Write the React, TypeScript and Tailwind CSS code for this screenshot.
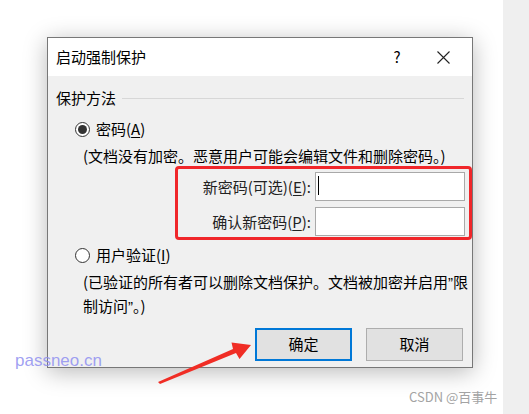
import React from "react";

const cjk = { fontFamily: '"Microsoft YaHei", "Noto Sans CJK SC", "Noto Sans", sans-serif' };
const latin = { fontFamily: '"Liberation Sans", Arial, sans-serif' };

function Radio({ checked }: { checked?: boolean }) {
  return (
    <span className="flex h-[15px] w-[15px] shrink-0 items-center justify-center rounded-full border border-[#333] bg-white">
      {checked && <span className="h-[9px] w-[9px] rounded-full bg-[#333]" />}
    </span>
  );
}

function Field({ label, hot, cursor }: { label: string; hot: string; cursor?: boolean }) {
  return (
    <div className="flex items-center">
      <div className="w-[137px] pr-[4px] text-right leading-5">
        {label}(<span className="underline underline-offset-2">{hot}</span>):
      </div>
      <div className="relative h-[29px] w-[150px] border border-[#a9a9a9] bg-white">
        {cursor && <span className="absolute left-[2px] top-[3px] h-[19px] w-px bg-black" />}
      </div>
    </div>
  );
}

export default function App() {
  return (
    <div className="relative flex h-[414px] w-[529px] overflow-hidden whitespace-nowrap bg-white text-[15px] text-black" style={cjk}>
      <div className="w-[503px] shrink-0 pl-[47px] pt-[37px]">
        <div className="flex h-[331px] w-[426px] flex-col border border-[#777] bg-[#f0f0f0] shadow-[0_4px_22px_rgba(0,0,0,0.28)]">
          <div className="flex h-[38px] shrink-0 items-center bg-white pl-[8px]">
            <span className="flex-1 leading-5">启动强制保护</span>
            <span className="w-[20px] text-center text-[15px]">?</span>
            <svg className="ml-[30px] mr-[22px]" width="13" height="13" viewBox="0 0 13 13">
              <path d="M0.5 0.5 L12.5 12.5 M12.5 0.5 L0.5 12.5" stroke="#222" strokeWidth="1.1" />
            </svg>
          </div>

          <div className="flex flex-1 flex-col pl-[8px] pt-[12px]">
            <div className="flex h-5 items-center">
              <span className="leading-5">保护方法</span>
              <span className="ml-[6px] mr-[8px] h-px flex-1 bg-[#d7d7d7]" />
            </div>

            <div className="mt-[11px] flex h-5 items-center pl-[19px]">
              <Radio checked />
              <span className="ml-[6px] leading-5">
                密码(<span className="underline underline-offset-2">A</span>)
              </span>
            </div>
            <div className="mt-[7px] pl-[27px] leading-5">(文档没有加密。恶意用户可能会编辑文件和删除密码。)</div>

            <div className="ml-[119px] flex w-[297px] flex-col gap-[6px] rounded-[4px] border-[3px] border-[#f0262a] pb-[1px] pt-[3px] text-[#222]">
              <Field label="新密码(可选)" hot="E" cursor />
              <Field label="确认新密码" hot="P" />
            </div>

            <div className="mt-[5px] flex h-5 items-center pl-[19px]">
              <Radio />
              <span className="ml-[6px] leading-5">
                用户验证(<span className="underline underline-offset-2">I</span>)
              </span>
            </div>
            <div className="mt-[5px] pl-[27px] leading-[23px]">
              <div>
                (已验证的所有者可以删除文档保护。文档被加密并启用<span style={latin}>”</span>限
              </div>
              <div>
                制访问<span style={latin}>”</span>。)
              </div>
            </div>

            <div className="mt-[10px] flex justify-end gap-[14px] pr-[9px]">
              <button className="h-[33px] w-[97px] border-2 border-[#0078d7] bg-[#e1e1e1] text-[15px]">确定</button>
              <button className="h-[33px] w-[97px] border border-[#adadad] bg-[#e1e1e1] text-[15px]">取消</button>
            </div>
          </div>
        </div>
      </div>
      <div className="flex-1 bg-[#efefef]" />

      <span className="absolute left-[15px] top-[349px] text-[17px] leading-6 text-[#8f8ff0]/85" style={latin}>
        passneo.cn
      </span>
      <span className="absolute left-[409px] top-[387px] text-[13px] leading-5 text-[#a3a3a3]">CSDN @百事牛</span>

      <svg className="pointer-events-none absolute left-0 top-0" width="529" height="414" viewBox="0 0 529 414">
        <polygon
          points="158,382 233,349 231.5,342.5 251,345 239.5,359 236,353 160,384"
          fill="#f02d25"
        />
      </svg>
    </div>
  );
}
